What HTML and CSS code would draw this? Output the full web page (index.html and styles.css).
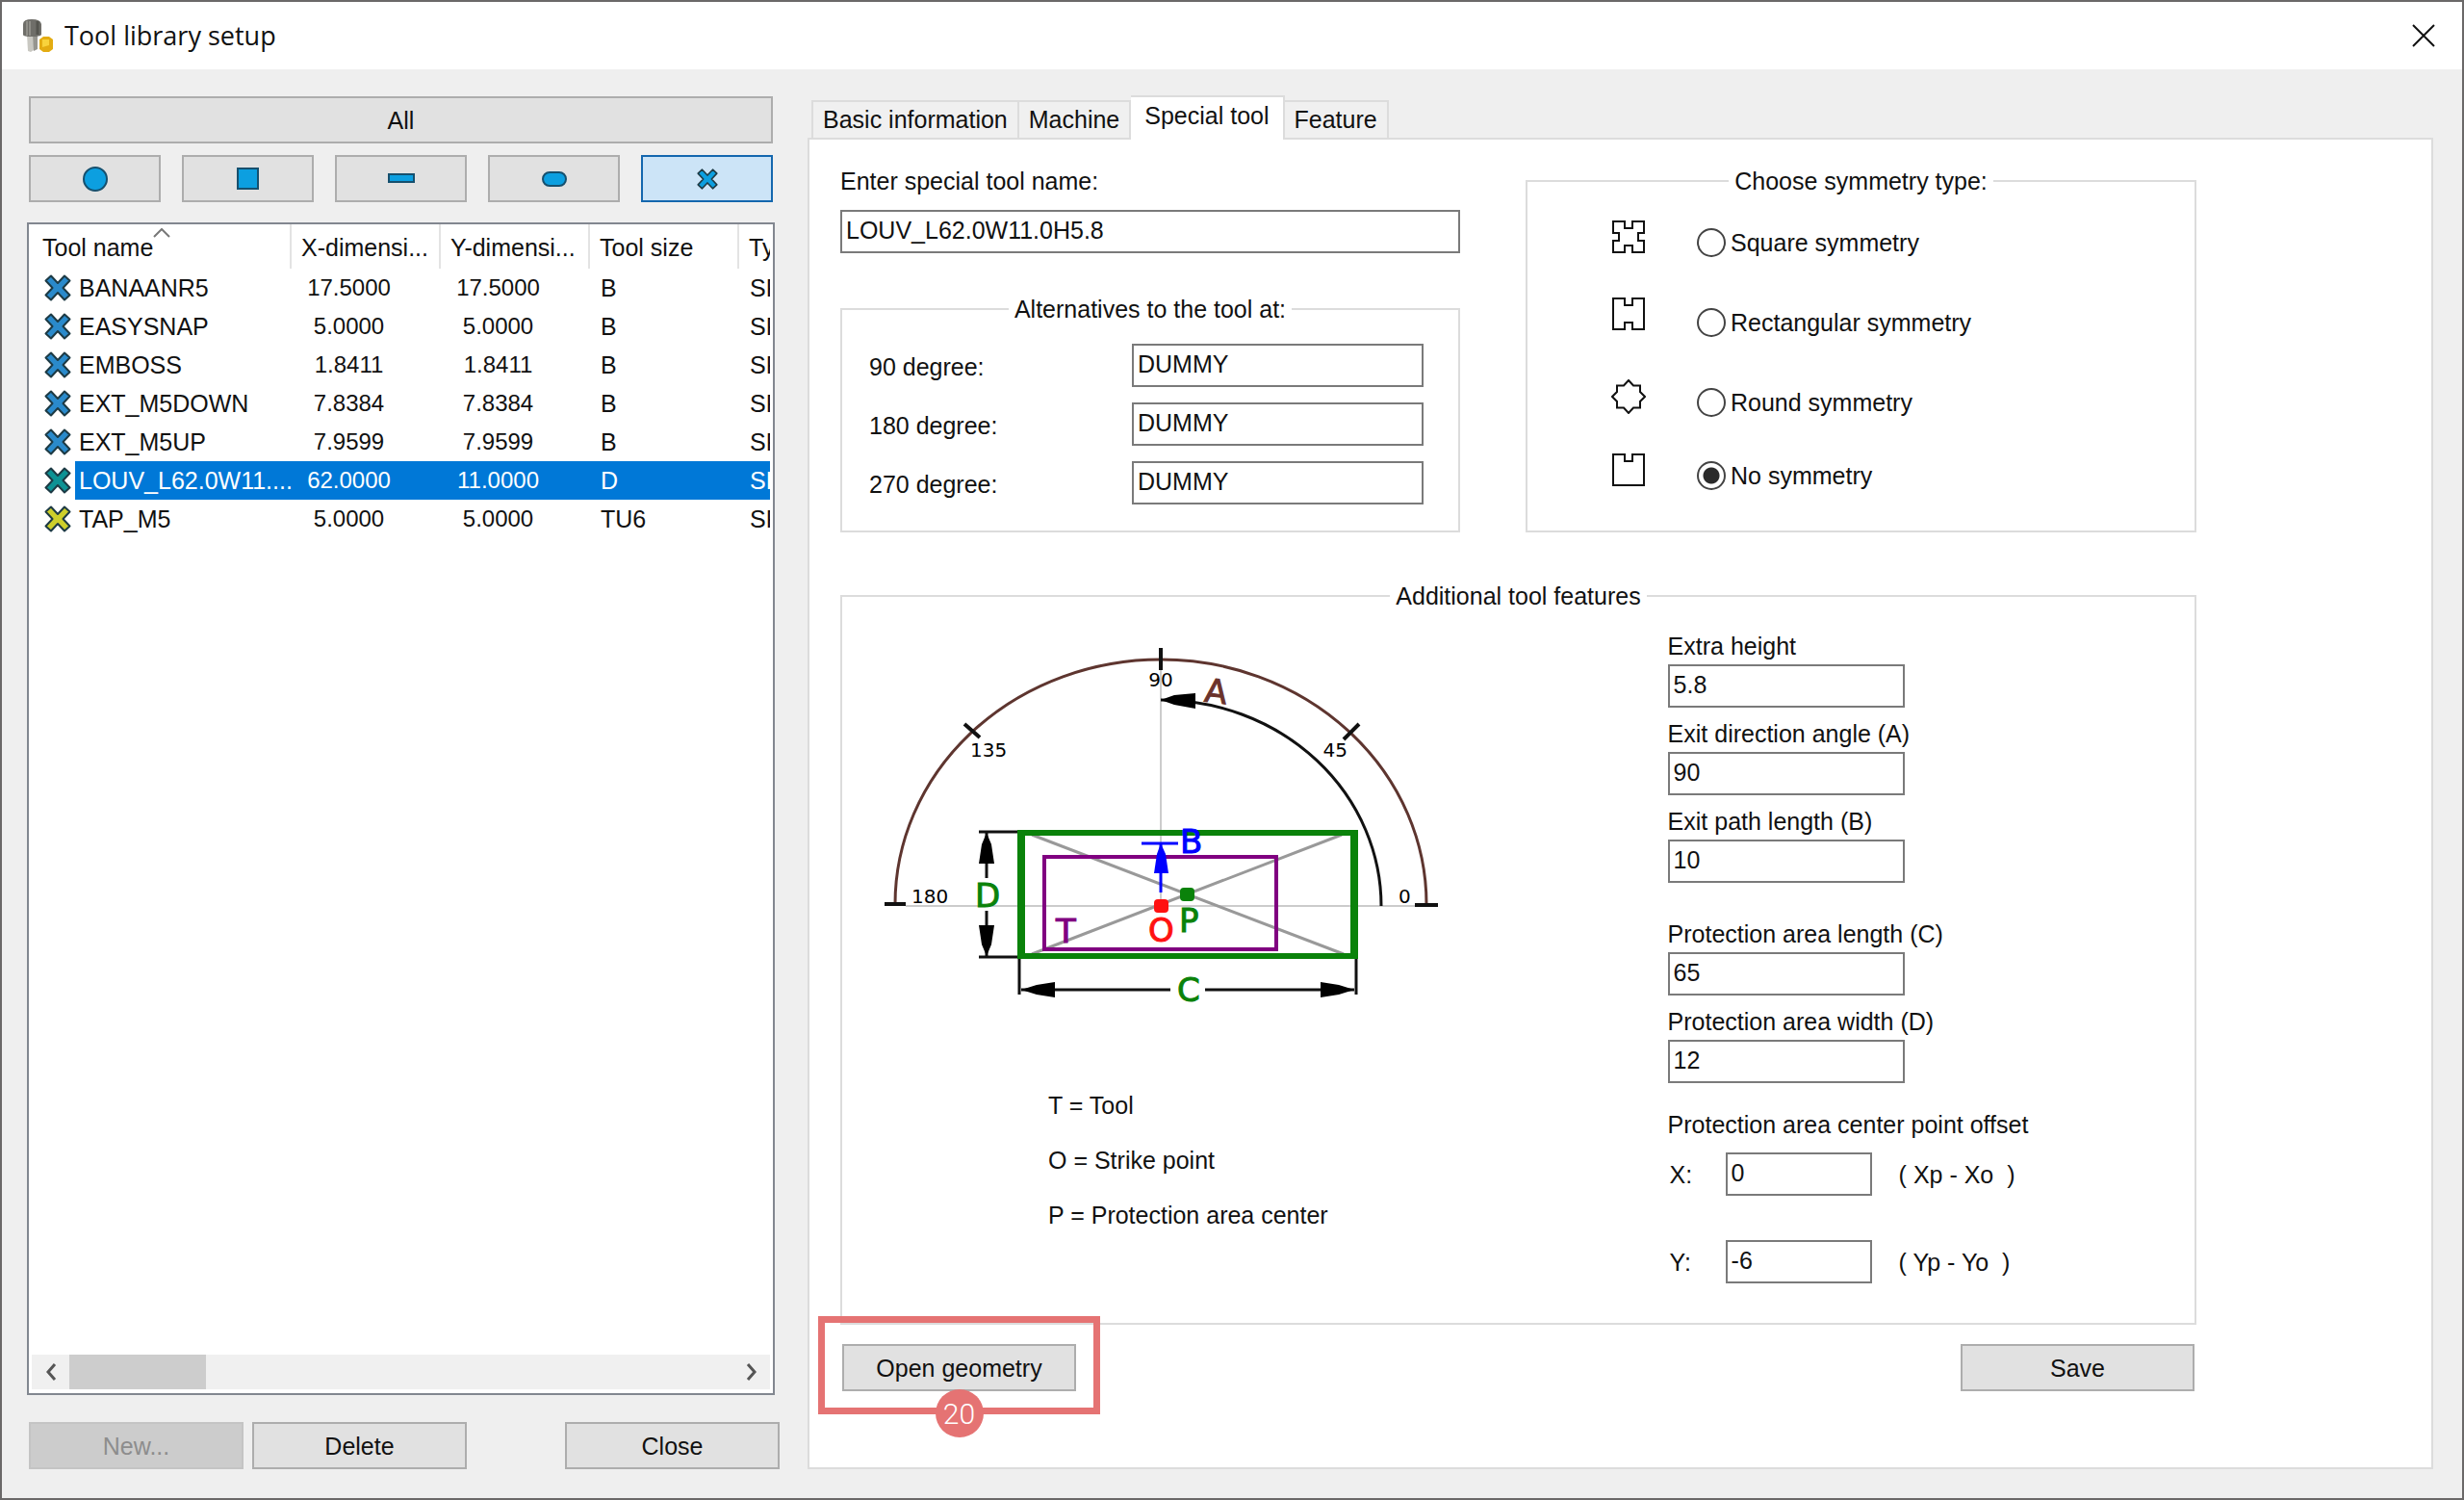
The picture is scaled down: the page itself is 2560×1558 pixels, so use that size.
FILE: index.html
```html
<!DOCTYPE html>
<html lang="en">
<head>
<meta charset="utf-8">
<title>Tool library setup</title>
<link rel="stylesheet" href="styles.css">
</head>
<body>
<svg class="defs" aria-hidden="true">
  <symbol id="cross" viewBox="0 0 28 28">
    <path d="M7 1.500L14 9L21 1.500L26.500 6.500L19.500 14L26.500 21.500L21 26.500L14 19L7 26.500L1.500 21.500L8.500 14L1.500 6.500Z" stroke="#1d3a44" stroke-width="2" stroke-linejoin="round"/>
  </symbol>
</svg>
<div class="window">
  <header class="titlebar">
    <svg class="app-icon" viewBox="0 0 34 36" aria-hidden="true">
      <path d="M6 17h7v16l-3 2-3-1z" fill="#c9c8c2"/>
      <path d="M12 17h5v15l-4 2z" fill="#96958f"/>
      <path d="M2 6Q2 1 11 1T21 6V17Q20 19 11 19T2 17Z" fill="#6f6e69"/>
      <path d="M6 3v15M9 3v15" stroke="#8f8e88" stroke-width="2"/>
      <path d="M17 3v14" stroke="#55544f" stroke-width="3"/>
      <path d="M19 22l4-3h6l4 3v10l-4 3h-6l-4-3z" fill="#e3ac12"/>
      <path d="M22 22h7v6l-7 2z" fill="#f8d33c"/>
    </svg>
    <h1 class="title">Tool library setup</h1>
    <button class="close" aria-label="Close window">
      <svg viewBox="0 0 24 24" width="24" height="24"><path d="M1 1L23 23M23 1L1 23" stroke="#111" stroke-width="2"/></svg>
    </button>
  </header>

  <div class="content">
    <aside class="sidebar">
      <div class="filters">
        <button class="btn all">All</button>
        <button class="btn" aria-label="Round tools"><svg width="28" height="28" viewBox="0 0 28 28"><circle cx="14" cy="14" r="12" class="shape"/></svg></button>
        <button class="btn" aria-label="Square tools"><svg width="28" height="28" viewBox="0 0 28 28"><rect x="3" y="3" width="21" height="21" class="shape"/></svg></button>
        <button class="btn" aria-label="Rectangular tools"><svg width="28" height="28" viewBox="0 0 28 28"><rect x="1" y="9" width="26" height="8" class="shape"/></svg></button>
        <button class="btn" aria-label="Oval tools"><svg width="28" height="28" viewBox="0 0 28 28"><rect x="2" y="7" width="24" height="14" rx="7" class="shape"/></svg></button>
        <button class="btn active" aria-label="Special tools"><svg width="22" height="22" viewBox="0 0 28 28" fill="#0c9fe0"><use href="#cross"/></svg></button>
      </div>

      <div class="list">
        <div class="list-view">
          <table class="tools">
            <colgroup><col class="c-icon"><col class="c-name"><col class="c-dim"><col class="c-dim"><col class="c-dim"><col></colgroup>
            <thead>
              <tr>
                <th colspan="2" class="sorted">Tool name<svg class="caret" width="18" height="10" viewBox="0 0 18 10"><path d="M1 9L9 1L17 9" fill="none" stroke="#777" stroke-width="2"/></svg></th>
                <th>X-dimensi...</th><th>Y-dimensi...</th><th>Tool size</th><th class="last">Type</th>
              </tr>
            </thead>
            <tbody>
              <tr><td class="icon"><svg class="blue"><use href="#cross"/></svg></td><td class="name">BANAANR5</td><td class="num">17.5000</td><td class="num">17.5000</td><td>B</td><td class="last">SPECIAL</td></tr>
              <tr><td class="icon"><svg class="blue"><use href="#cross"/></svg></td><td class="name">EASYSNAP</td><td class="num">5.0000</td><td class="num">5.0000</td><td>B</td><td class="last">SPECIAL</td></tr>
              <tr><td class="icon"><svg class="blue"><use href="#cross"/></svg></td><td class="name">EMBOSS</td><td class="num">1.8411</td><td class="num">1.8411</td><td>B</td><td class="last">SPECIAL</td></tr>
              <tr><td class="icon"><svg class="blue"><use href="#cross"/></svg></td><td class="name">EXT_M5DOWN</td><td class="num">7.8384</td><td class="num">7.8384</td><td>B</td><td class="last">SPECIAL</td></tr>
              <tr><td class="icon"><svg class="blue"><use href="#cross"/></svg></td><td class="name">EXT_M5UP</td><td class="num">7.9599</td><td class="num">7.9599</td><td>B</td><td class="last">SPECIAL</td></tr>
              <tr class="selected"><td class="icon"><svg class="teal"><use href="#cross"/></svg></td><td class="name">LOUV_L62.0W11....</td><td class="num">62.0000</td><td class="num">11.0000</td><td>D</td><td class="last">SPECIAL</td></tr>
              <tr><td class="icon"><svg class="yellow"><use href="#cross"/></svg></td><td class="name">TAP_M5</td><td class="num">5.0000</td><td class="num">5.0000</td><td>TU6</td><td class="last">SPECIAL</td></tr>
            </tbody>
          </table>
        </div>
        <div class="scrollbar">
          <button class="arrow" aria-label="Scroll left"><svg width="14" height="18" viewBox="0 0 14 18"><path d="M11 1L4 9L11 17" fill="none" stroke="#555" stroke-width="3"/></svg></button>
          <div class="track"><div class="thumb"></div></div>
          <button class="arrow" aria-label="Scroll right"><svg width="14" height="18" viewBox="0 0 14 18"><path d="M3 1L10 9L3 17" fill="none" stroke="#555" stroke-width="3"/></svg></button>
        </div>
      </div>

      <div class="actions">
        <button class="btn" disabled>New...</button>
        <button class="btn">Delete</button>
        <button class="btn push">Close</button>
      </div>
    </aside>

    <main class="main">
      <div class="tabs" role="tablist">
        <button class="tab" role="tab">Basic information</button>
        <button class="tab" role="tab">Machine</button>
        <button class="tab current" role="tab" aria-selected="true">Special tool</button>
        <button class="tab" role="tab">Feature</button>
      </div>
      <div class="panel" role="tabpanel">
        <div class="top">
          <div class="naming">
            <label for="tool-name">Enter special tool name:</label>
            <input class="text" id="tool-name" value="LOUV_L62.0W11.0H5.8">
            <fieldset class="group alternatives">
              <legend>Alternatives to the tool at:</legend>
              <div class="alt-grid">
                <label for="alt90">90 degree:</label><input class="text" id="alt90" value="DUMMY">
                <label for="alt180">180 degree:</label><input class="text" id="alt180" value="DUMMY">
                <label for="alt270">270 degree:</label><input class="text" id="alt270" value="DUMMY">
              </div>
            </fieldset>
          </div>
          <fieldset class="group symmetry">
            <legend>Choose symmetry type:</legend>
            <div class="choices">
              <div class="choice">
                <svg class="sym" viewBox="0 0 36 36"><path d="M2 2H14V9H22V2H34V14H28V22H34V34H22V27H14V34H2V22H8V14H2Z"/></svg>
                <label><input type="radio" name="sym">Square symmetry</label>
              </div>
              <div class="choice">
                <svg class="sym raised" viewBox="0 0 36 36"><path d="M2 2H14V9H22V2H34V34H22V27H14V34H2Z"/></svg>
                <label><input type="radio" name="sym">Rectangular symmetry</label>
              </div>
              <div class="choice">
                <svg class="sym" viewBox="0 0 36 36"><path d="M18 1L23 6.500H30V13L35 18L30 23V29.500H23L18 35L13 29.500H6V23L1 18L6 13V6.500H13Z"/></svg>
                <label><input type="radio" name="sym">Round symmetry</label>
              </div>
              <div class="choice">
                <svg class="sym" viewBox="0 0 36 36"><path d="M2 2H14V9H22V2H34V34H2Z"/></svg>
                <label><input type="radio" name="sym" checked>No symmetry</label>
              </div>
            </div>
          </fieldset>
        </div>

        <fieldset class="group features">
          <legend>Additional tool features</legend>
          <div class="feature-grid">
            <div class="figure">
              <svg class="diagram" viewBox="915 670 585 380" role="img" aria-label="Exit angle and protection area">
                <path d="M1206 697V942M941 942H1470" stroke="#ccc" stroke-width="2"/>
                <path d="M930 940A276 254 0 0 1 1482 940" fill="none" stroke="#5e352f" stroke-width="3"/>
                <path d="M1206 728A229 214 0 0 1 1435 942" fill="none" stroke="#111" stroke-width="3"/>
                <path d="M1206 728L1220 723L1242 721V737L1220 733Z"/>
                <path d="M1206 674V697M1002 753L1018 767M1412 753L1396 769M919 940H941M1470 941H1494" stroke="#111" stroke-width="4"/>
                <path d="M1072 868L1396 992M1072 992L1394 868" stroke="#999" stroke-width="3"/>
                <path d="M1083 889H1328V989H1083ZM1087 893V985H1324V893Z" fill="#800080" fill-rule="evenodd"/>
                <path d="M1057 863H1411V997H1057ZM1065 869V991H1403V869Z" fill="#0a820a" fill-rule="evenodd"/>
                <path d="M1017 865H1057M1017 995H1057M1059 997V1034M1409 997V1034M1025 866V913M1025 947V994M1061 1029H1216M1252 1029H1407" stroke="#111" stroke-width="3"/>
                <path d="M1025 866L1030 878L1033 898H1017L1020 878ZM1025 994L1030 982L1033 962H1017L1020 982ZM1061 1029L1077 1024L1096 1021V1037L1077 1034ZM1407 1029L1391 1024L1372 1021V1037L1391 1034Z"/>
                <path d="M1186 877H1224M1206 877V928" stroke="#00f" stroke-width="3"/>
                <path d="M1206 877L1211 888L1214 908H1199L1202 888Z" fill="#00f"/>
                <rect x="1226" y="923" width="15" height="14" rx="4" fill="#0a820a"/>
                <rect x="1199" y="935" width="15" height="14" rx="4" fill="#f11"/>
                <g class="degrees">
                  <text x="1206" y="714" text-anchor="middle">90</text>
                  <text x="1008" y="787">135</text>
                  <text x="1400" y="787" text-anchor="end">45</text>
                  <text x="947" y="939">180</text>
                  <text x="1453" y="939">0</text>
                </g>
                <g class="marks">
                  <text x="1252" y="731" fill="#6b332b" stroke="#6b332b" transform="rotate(7 1264 718)">A</text>
                  <text x="1226" y="887" fill="#00f" stroke="#00f">B</text>
                  <text x="1223" y="1041" fill="#0a820a" stroke="#0a820a">C</text>
                  <text x="1013" y="943" fill="#0a820a" stroke="#0a820a">D</text>
                  <text x="1193" y="979" fill="#f11" stroke="#f11">O</text>
                  <text x="1225" y="969" fill="#0a820a" stroke="#0a820a">P</text>
                  <text x="1097" y="980" fill="#800080" stroke="#800080">T</text>
                </g>
              </svg>
              <ul class="key">
                <li>T = Tool</li>
                <li>O = Strike point</li>
                <li>P = Protection area center</li>
              </ul>
            </div>
            <div class="values">
              <div class="field"><label for="height">Extra height</label><input class="text" id="height" value="5.8"></div>
              <div class="field"><label for="angle">Exit direction angle (A)</label><input class="text" id="angle" value="90"></div>
              <div class="field"><label for="path">Exit path length (B)</label><input class="text" id="path" value="10"></div>
              <div class="field spaced"><label for="len">Protection area length (C)</label><input class="text" id="len" value="65"></div>
              <div class="field"><label for="wid">Protection area width (D)</label><input class="text" id="wid" value="12"></div>
              <p class="offset-title">Protection area center point offset</p>
              <div class="offsets">
                <label for="ox">X:</label><input class="text" id="ox" value="0"><span>( Xp - Xo&nbsp; )</span>
                <label for="oy">Y:</label><input class="text" id="oy" value="-6"><span>( Yp - Yo&nbsp; )</span>
              </div>
            </div>
          </div>
        </fieldset>

        <div class="panel-actions">
          <div class="callout">
            <button class="btn">Open geometry</button>
            <div class="frame"><span class="badge">20</span></div>
          </div>
          <button class="btn">Save</button>
        </div>
      </div>
    </main>
  </div>
</div>
</body>
</html>
```
FILE: styles.css
```css
* { box-sizing: border-box; }

body {
  margin: 0;
  color: #111;
  font: 25px/30px "Liberation Sans", Arial, sans-serif;
}

button, input { font: inherit; color: inherit; }
button { padding: 0; }
svg { display: block; }
.defs { position: absolute; width: 0; height: 0; }

.window {
  display: flex;
  flex-direction: column;
  min-height: 100vh;
  border: 2px solid #6b6969;
  background: #efefef;
}

/* Title bar */
.titlebar {
  display: flex;
  align-items: center;
  height: 70px;
  padding: 0 28px 0 20px;
  background: #fff;
}
.app-icon { width: 34px; height: 36px; }
.title {
  flex: 1;
  margin: 0 0 0 11px;
  font: 27px/36px "Open Sans", "Noto Sans", sans-serif;
}
.close { border: 0; background: none; }

.content {
  display: flex;
  flex: 1;
  gap: 29px;
  padding: 27px 30px 30px 26px;
}

.btn {
  display: flex;
  align-items: center;
  justify-content: center;
  height: 49px;
  border: 2px solid #adadad;
  background: #e1e1e1;
}
.btn.active { border-color: #1467ae; background: #cce4f7; }
.btn:disabled { border-color: #c4c4c4; background: #ccc; color: #8d8d8d; }

/* Left side */
.sidebar {
  display: flex;
  flex-direction: column;
  flex: 0 0 782px;
}
.filters {
  display: grid;
  grid-template-columns: repeat(5, 1fr);
  gap: 12px 22px;
  margin: 1px 7px 21px 2px;
}
.all { grid-column: 1 / -1; }
.shape { fill: #0c9fe0; stroke: #16506e; stroke-width: 2; }

.list {
  display: flex;
  flex-direction: column;
  flex: 1;
  margin-right: 5px;
  padding: 0 3px 4px 0;
  border: 2px solid #828790;
  background: #fff;
}
.list-view { flex: 1; overflow: hidden; }
.tools { width: 100%; border-collapse: separate; border-spacing: 0; table-layout: fixed; }
.c-icon { width: 48px; }
.c-name { width: 225px; }
.c-dim { width: 155px; }
.tools th, .tools td {
  height: 40px;
  padding: 0 0 0 11px;
  overflow: hidden;
  font-weight: 400;
  text-align: left;
  white-space: nowrap;
}
.tools th {
  position: relative;
  height: 46px;
  padding: 2px 5px 0 10px;
  border-right: 2px solid #e3e3e3;
}
.tools th.sorted { padding-left: 14px; }
.tools .last { padding-right: 0; border: 0; }
.caret { position: absolute; top: 4px; left: 129px; }
.tools td.icon { padding: 0 0 0 16px; }
.icon svg { width: 28px; height: 28px; }
.tools td.name { padding-left: 4px; }
.tools td.num { padding: 0 36px 0 0; text-align: center; font-size: 24px; }
.blue { fill: #2a8acb; }
.teal { fill: #0d9294; }
.yellow { fill: #cdcf2b; }
.selected td:not(.icon) { background: #0078d7; color: #fff; }

.scrollbar { display: flex; height: 36px; margin-left: 3px; background: #f0f0f0; }
.arrow {
  display: flex;
  align-items: center;
  justify-content: center;
  width: 39px;
  border: 0;
  background: none;
}
.track { flex: 1; }
.thumb { width: 142px; height: 36px; background: #cdcdcd; }

.actions { display: flex; gap: 9px; margin: 28px 0 0 2px; }
.actions .btn { width: 223px; }
.actions .push { margin-left: auto; }

/* Right side */
.main { display: flex; flex-direction: column; flex: 1; }
.tabs { display: flex; align-items: flex-end; padding-left: 4px; }
.tab {
  height: 39px;
  padding: 0 10px 2px;
  border: 2px solid #dcdcdc;
  border-width: 2px 2px 0 0;
  background: #f0f0f0;
}
.tab:first-child { border-left-width: 2px; }
.tab.current {
  position: relative;
  height: 46px;
  margin: 0 0 -2px;
  padding: 0 14px 6px;
  background: #fff;
}
.panel {
  flex: 1;
  padding: 28px 244px 0 32px;
  border: 2px solid #dcdcdc;
  background: #fff;
}
.text {
  width: 100%;
  height: 45px;
  padding: 0 4px 3px;
  border: 2px solid #7a7a7a;
  border-radius: 0;
  background: #fff;
}
.group {
  min-width: 0;
  margin: 0;
  padding: 0;
  border: 2px solid #dcdcdc;
}
.group legend { margin: 0 auto; padding: 0 6px; }

.top {
  display: grid;
  grid-template-columns: 644fr 697fr;
  gap: 68px;
}
.naming { display: flex; flex-direction: column; gap: 15px; }
.alternatives { margin-top: 28px; }
.alt-grid {
  display: grid;
  grid-template-columns: 1fr 303px;
  align-items: center;
  gap: 16px;
  padding: 21px 36px 27px 28px;
}
.alt-grid label { padding-top: 2px; }

.choices {
  display: grid;
  grid-template-rows: 83px 83px 76px 39px;
  padding: 25px 0 0 87px;
}
.choice { display: flex; align-items: flex-start; gap: 53px; }
.choice label { display: flex; align-items: center; gap: 5px; margin-top: 9px; }
.choice input {
  appearance: none;
  width: 30px;
  height: 30px;
  margin: 0;
  border: 2px solid #444;
  border-radius: 50%;
}
.choice input:checked { background: radial-gradient(circle, #2b2b2b 8px, #fff 9px); }
.sym { width: 36px; height: 36px; fill: none; stroke: #111; stroke-width: 2; }
.raised { margin-top: -3px; }

.features { margin-top: 51px; }
.feature-grid {
  display: grid;
  grid-template-columns: 857fr 547fr;
  padding: 22px 0 41px;
}
.figure { padding: 13px 0 0 40px; }
.diagram { width: 585px; height: 380px; }
.degrees { font: 20px "DejaVu Sans", sans-serif; }
.marks { font: 34px "DejaVu Sans", sans-serif; stroke-width: 1px; }
.key {
  display: grid;
  gap: 27px;
  margin: 84px 0 0 174px;
  padding: 0;
  list-style: none;
}

.values { display: flex; flex-direction: column; gap: 12px; }
.field { display: flex; flex-direction: column; gap: 4px; }
.field .text { width: 246px; }
.spaced { margin-top: 26px; }
.offset-title { margin: 16px 0 2px; }
.offsets {
  display: grid;
  grid-template-columns: 32px 152px auto;
  align-items: center;
  gap: 46px 28px;
}
.offsets label { padding-left: 2px; }

.panel-actions { display: flex; justify-content: space-between; margin-top: 20px; padding: 0 2px; }
.panel-actions .btn { width: 243px; }

.callout { position: relative; }
.frame {
  position: absolute;
  inset: -29px -25px -24px;
  border: 7px solid #e57373;
  pointer-events: none;
}
.badge {
  position: absolute;
  bottom: -31px;
  left: 50%;
  width: 50px;
  height: 50px;
  margin-left: -25px;
  border-radius: 50%;
  background: #e57373;
  color: #fff;
  font: 300 30px/52px Roboto, sans-serif;
  text-align: center;
}
```
